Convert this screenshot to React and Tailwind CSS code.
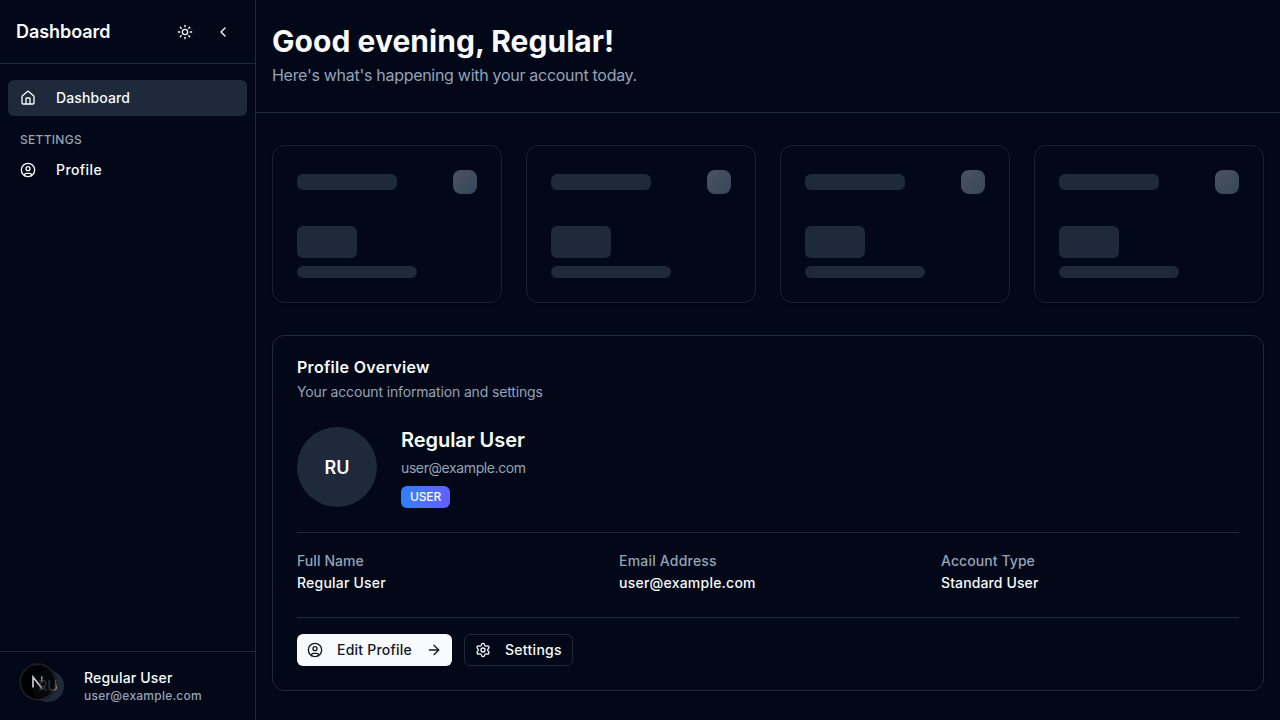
import { Sun, ChevronLeft, House, CircleUser, Settings, ArrowRight } from "lucide-react";

function SkeletonCard() {
  return (
    <div className="h-[158px] rounded-xl border border-[#182130] p-6 shadow-sm">
      <div className="flex h-6 items-center justify-between">
        <div className="h-4 w-[100px] rounded-md bg-[#1e293b]" />
        <div className="size-6 rounded-lg bg-linear-to-br from-[#4b5260] to-[#36475a]" />
      </div>
      <div className="mt-8 h-8 w-[60px] rounded-md bg-[#1e293b]" />
      <div className="mt-2 h-3 w-[120px] rounded-md bg-[#1e293b]" />
    </div>
  );
}

function Field({ label, value, labelClass, valueClass }) {
  return (
    <div className="flex flex-col gap-0.5 text-sm font-medium">
      <p className={`text-[#94a3b8] ${labelClass}`}>{label}</p>
      <p className={valueClass}>{value}</p>
    </div>
  );
}

function DevToolsBadge() {
  return (
    <div className="absolute left-5 top-3 flex size-9 items-center justify-center rounded-full bg-black/80 shadow-[0_0_0_1px_#171717,inset_0_0_0_1px_rgba(255,255,255,0.14)]">
      <svg viewBox="0 0 36 36" className="size-9" fill="none">
        <defs>
          <linearGradient id="stem" x1="14" y1="14" x2="25" y2="26" gradientUnits="userSpaceOnUse">
            <stop offset="0.4" stopColor="#d4d4d4" />
            <stop offset="1" stopColor="#d4d4d4" stopOpacity="0.25" />
          </linearGradient>
          <linearGradient id="bar" x1="22" y1="12" x2="22" y2="20" gradientUnits="userSpaceOnUse">
            <stop stopColor="#d4d4d4" />
            <stop offset="1" stopColor="#d4d4d4" stopOpacity="0" />
          </linearGradient>
        </defs>
        <path d="M13 23.5V13L22.7 25.2" stroke="url(#stem)" strokeWidth="1.6" />
        <path d="M21.8 12.5V20" stroke="url(#bar)" strokeWidth="1.5" />
      </svg>
    </div>
  );
}

export default function App() {
  return (
    <div className="flex h-[720px] w-[1280px] overflow-hidden bg-[#020817] font-['Inter',sans-serif] whitespace-nowrap text-[#f8fafc] antialiased">
      <aside className="flex w-64 shrink-0 flex-col border-r border-[#1e293b]">
        <div className="flex h-16 items-center border-b border-[#1e293b] px-4">
          <h2 className="flex-1 pt-px text-lg font-semibold tracking-[-0.07px]">Dashboard</h2>
          <div className="flex gap-[22px] pr-2">
            <Sun className="size-4" />
            <ChevronLeft className="size-4" />
          </div>
        </div>
        <nav className="flex-1 px-2 pt-4 text-sm font-medium">
          <div className="flex h-9 items-center gap-5 rounded-md bg-[#1e293b] px-3 tracking-[0.11px]">
            <House className="size-4" />
            <span>Dashboard</span>
          </div>
          <p className="mt-4 px-3 text-xs tracking-[0.28px] text-[#94a3b8]">SETTINGS</p>
          <div className="mt-1 flex h-9 items-center gap-5 px-3 tracking-[0.4px]">
            <CircleUser className="size-4" />
            <span>Profile</span>
          </div>
        </nav>
        <div className="relative flex h-[69px] items-center gap-5 border-t border-[#1e293b] pl-8">
          <div className="flex size-8 items-center justify-center rounded-full bg-[#1e293b] text-sm">RU</div>
          <div>
            <p className="text-sm font-medium tracking-[0.18px]">Regular User</p>
            <p className="text-xs font-medium tracking-[0.24px] text-[#94a3b8]">user@example.com</p>
          </div>
          <DevToolsBadge />
        </div>
      </aside>
      <main className="flex-1">
        <header className="border-b border-[#1e293b] px-4 pb-[25px] pt-[23px]">
          <h1 className="text-3xl font-bold tracking-[0.04px]">Good evening, Regular!</h1>
          <p className="mt-1 tracking-[-0.29px] text-[#94a3b8]">Here's what's happening with your account today.</p>
        </header>
        <div className="px-4 py-8">
          <div className="grid grid-cols-4 gap-6">
            <SkeletonCard />
            <SkeletonCard />
            <SkeletonCard />
            <SkeletonCard />
          </div>
          <section className="mt-8 h-[356px] rounded-xl border border-[#1e293b] px-6 pt-[19px] shadow-sm">
            <h3 className="font-semibold tracking-[0.3px]">Profile Overview</h3>
            <p className="mt-[3px] text-sm tracking-[-0.15px] text-[#94a3b8]">Your account information and settings</p>
            <div className="mt-[25px] flex h-20 items-center gap-6">
              <div className="flex size-20 items-center justify-center rounded-full bg-[#1e293b] pt-0.5 text-lg font-semibold">RU</div>
              <div className="flex flex-col items-start">
                <h4 className="text-xl font-semibold tracking-[-0.06px]">Regular User</h4>
                <p className="mt-1 text-sm tracking-[-0.4px] text-[#94a3b8]">user@example.com</p>
                <span className="mt-2 flex h-[22px] w-[49px] items-center justify-center rounded-md bg-linear-to-r from-[#2b7fff] to-[#615fff] text-xs font-medium tracking-[-0.1px]">USER</span>
              </div>
            </div>
            <div className="mt-[25px] grid grid-cols-3 gap-6 border-t border-[#1e293b] pb-6 pt-[18px]">
              <Field label="Full Name" value="Regular User" labelClass="tracking-[0.08px]" valueClass="tracking-[0.2px]" />
              <Field label="Email Address" value="user@example.com" labelClass="tracking-[0.2px]" valueClass="tracking-[0.23px]" />
              <Field label="Account Type" value="Standard User" labelClass="tracking-[0.08px]" valueClass="tracking-[0.12px]" />
            </div>
            <div className="flex gap-3 border-t border-[#1e293b] pt-4 text-sm font-medium">
              <button className="flex h-8 w-[155px] items-center rounded-md bg-[#f8fafc] px-2.5 text-[#0f172a]">
                <CircleUser className="size-4" />
                <span className="ml-3.5 flex-1 text-left tracking-[0.22px]">Edit Profile</span>
                <ArrowRight className="size-4" />
              </button>
              <button className="flex h-8 w-[109px] items-center gap-3.5 rounded-md border border-[#1e293b] px-2.5">
                <Settings className="size-4" />
                <span className="tracking-[0.29px]">Settings</span>
              </button>
            </div>
          </section>
        </div>
      </main>
    </div>
  );
}
